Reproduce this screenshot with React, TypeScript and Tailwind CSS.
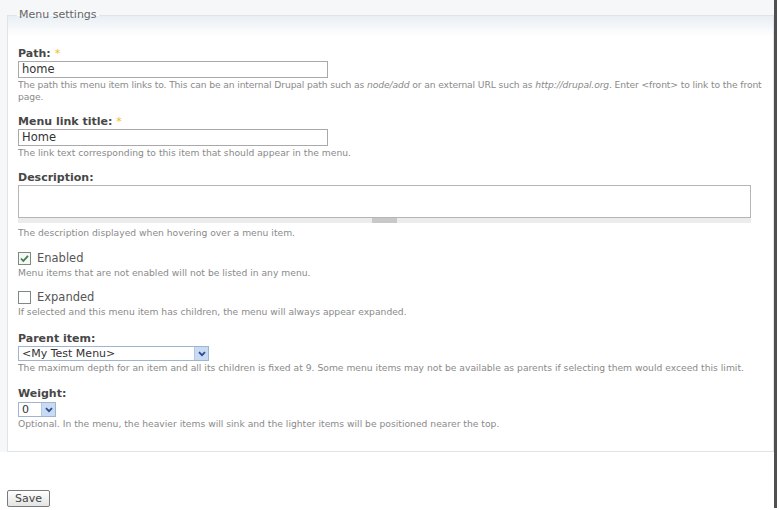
import React from "react";

const font = { fontFamily: '"DejaVu Sans", Verdana, sans-serif' };

function Req() {
  return <span className="ml-[4px] font-normal text-[#f2b90f]">*</span>;
}

function Label({ children, req }: { children: React.ReactNode; req?: boolean }) {
  return (
    <div className="h-[15px] leading-[15px] text-[11px] font-bold text-[#474747]">
      {children}
      {req && <Req />}
    </div>
  );
}

function Desc({ children, className = "" }: { children: React.ReactNode; className?: string }) {
  return (
    <div className={"text-[9.2px] leading-[12px] text-[#8a8a8a] " + className}>{children}</div>
  );
}

function Check({ checked }: { checked?: boolean }) {
  return (
    <svg width="13" height="13" viewBox="0 0 13 13" className="shrink-0">
      <rect x="0.5" y="0.5" width="12" height="12" fill={checked ? "#f4f7f4" : "#ffffff"} stroke="#7d8a80" />
      {checked && (
        <path d="M3 6.5 L5.3 9 L10 3.8" fill="none" stroke="#3f7d4c" strokeWidth="1.8" />
      )}
    </svg>
  );
}

function SelectBox({ text, width }: { text: string; width: string }) {
  return (
    <div className={"flex h-[15px] items-stretch border border-[#9fb4cf] bg-white " + width}>
      <div className="flex-1 pl-[3px] text-[11px] leading-[13px] text-[#333]">{text}</div>
      <div className="flex w-[14px] items-center justify-center bg-[#c9daf3] border-l border-[#b5c9e6]">
        <svg width="8" height="6" viewBox="0 0 8 6">
          <path d="M1 1.2 L4 4.2 L7 1.2" fill="none" stroke="#2c4c8c" strokeWidth="1.8" />
        </svg>
      </div>
    </div>
  );
}

export default function App() {
  return (
    <div className="w-[779px] h-[510px] bg-white overflow-hidden" style={font}>
      <div className="w-[777px] h-[508px] border-r-[3px] border-b-[3px] border-[#505050] bg-[#f6f7f9] flex flex-col">
        <fieldset className="mt-[7px] ml-[7px] w-[767px] border border-[#dfe4e8] bg-gradient-to-b from-[#e9eff4] via-white to-white bg-[length:100%_40px] bg-no-repeat bg-white pl-[10px] pr-[4px] pt-[23px] pb-[21px]">
          <legend className="ml-[-1px] px-[2px] text-[11px] leading-[16px] text-[#666]">Menu settings</legend>

          <Label req>Path:</Label>
          <div className="h-[17px] w-[310px] border border-[#a9a9a9] bg-white pl-[3px] text-[11.5px] leading-[15px] text-[#333]">
            home
          </div>
          <Desc className="mt-[1px] tracking-[-0.12px]">
            The path this menu item links to. This can be an internal Drupal path such as <i>node/add</i> or an
            external URL such as <i>http://drupal.org</i>. Enter &lt;front&gt; to link to the front page.
          </Desc>

          <div className="mt-[11px]">
            <Label req>Menu link title:</Label>
            <div className="h-[17px] w-[310px] border border-[#a9a9a9] bg-white pl-[3px] text-[11.5px] leading-[15px] text-[#333]">
              Home
            </div>
            <Desc className="mt-[1px]">The link text corresponding to this item that should appear in the menu.</Desc>
          </div>

          <div className="mt-[11px]">
            <Label>Description:</Label>
            <div className="w-[733px]">
              <div className="h-[33px] border border-[#b5b5b5] bg-white" />
              <div className="flex h-[5px] justify-center bg-[#ececec]">
                <div className="w-[25px] bg-[#c8c8c8]" />
              </div>
            </div>
            <Desc className="mt-[4px]">The description displayed when hovering over a menu item.</Desc>
          </div>

          <div className="mt-[12px]">
            <div className="flex h-[15px] items-center gap-[6px]">
              <Check checked />
              <span className="text-[11.5px] text-[#555]">Enabled</span>
            </div>
            <Desc className="mt-[1px]">Menu items that are not enabled will not be listed in any menu.</Desc>
          </div>

          <div className="mt-[11px]">
            <div className="flex h-[15px] items-center gap-[6px]">
              <Check />
              <span className="text-[11.5px] text-[#555]">Expanded</span>
            </div>
            <Desc className="mt-[1px]">
              If selected and this menu item has children, the menu will always appear expanded.
            </Desc>
          </div>

          <div className="mt-[13px]">
            <Label>Parent item:</Label>
            <SelectBox text="<My Test Menu>" width="w-[191px]" />
            <Desc className="mt-[1px]">
              The maximum depth for an item and all its children is fixed at 9. Some menu items may not be available
              as parents if selecting them would exceed this limit.
            </Desc>
          </div>

          <div className="mt-[12px]">
            <Label>Weight:</Label>
            <div className="mt-[1px]">
              <SelectBox text="0" width="w-[38px]" />
            </div>
            <Desc className="mt-[1px]">
              Optional. In the menu, the heavier items will sink and the lighter items will be positioned nearer the
              top.
            </Desc>
          </div>
        </fieldset>

        <div className="bg-white flex-1 pl-[7px] pt-[33px]">
          <button className="h-[17px] w-[43px] rounded-[2px] border border-[#7a7a7a] bg-gradient-to-b from-white to-[#e4e4e4] text-[11px] leading-[15px] text-[#444]">
            Save
          </button>
        </div>
      </div>
    </div>
  );
}
